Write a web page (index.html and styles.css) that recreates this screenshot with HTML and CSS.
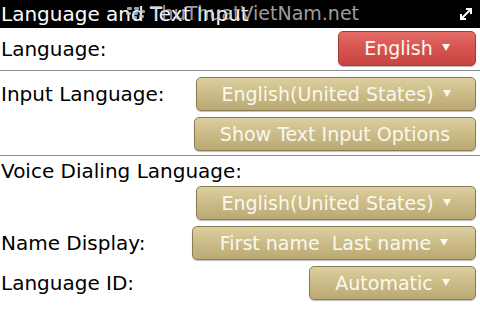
FILE: index.html
```html
<!DOCTYPE html>
<html lang="en">
<head>
    <meta charset="UTF-8">
    <meta name="viewport" content="width=device-width, initial-scale=1.0">
    <title>Language and Text Input</title>
    <link rel="stylesheet" href="styles.css">
</head>
<body>
    <div id="titlebar">
        <h1>Language and Text Input</h1>
        <div class="watermark">
            <svg width="20" height="14" viewBox="0 0 20 14">
                <rect x="1" y="1" width="5" height="3" rx="1"/>
                <rect x="8" y="1" width="5" height="3" rx="1"/>
                <rect x="0" y="6" width="5" height="3" rx="1"/>
                <rect x="7" y="6" width="5" height="3" rx="1"/>
                <rect x="14" y="4" width="5" height="3" rx="1"/>
                <rect x="6" y="10" width="5" height="3" rx="1"/>
                <rect x="13" y="9" width="5" height="3" rx="1"/>
            </svg>
            <span>ThuThuatVietNam.net</span>
        </div>
        <svg class="expand" width="16" height="16" viewBox="0 0 16 16">
            <path d="M3 13 L13 3 M8 3 H13 V8 M3 8 V13 H8" fill="none" stroke="#fff" stroke-width="2"/>
        </svg>
    </div>

    <div class="section first">
        <div class="row">
            <span class="label">Language:</span>
            <button class="select red">English<i class="arrow"></i></button>
        </div>
    </div>

    <div class="section">
        <div class="row">
            <span class="label">Input Language:</span>
            <button class="select w-wide">English(United States)<i class="arrow"></i></button>
        </div>
        <div class="row end">
            <button class="select w-wide2">Show Text Input Options</button>
        </div>
    </div>

    <div class="section last">
        <div class="label-line">Voice Dialing Language:</div>
        <div class="row end">
            <button class="select w-wide">English(United States)<i class="arrow"></i></button>
        </div>
        <div class="row">
            <span class="label">Name Display:</span>
            <button class="select w-name">First name&nbsp; Last name<i class="arrow"></i></button>
        </div>
        <div class="row">
            <span class="label">Language ID:</span>
            <button class="select w-auto">Automatic<i class="arrow"></i></button>
        </div>
    </div>
</body>
</html>
```

FILE: styles.css
```css
body {
    font-family: "DejaVu Sans", sans-serif;
    background-color: #fff;
    margin: 0;
    padding: 0;
    width: 480px;
    height: 320px;
    overflow: hidden;
}

#titlebar {
    position: relative;
    height: 28px;
    background-color: #000;
    display: flex;
    align-items: center;
    justify-content: space-between;
    padding: 0 4px 0 1px;
}

#titlebar h1 {
    margin: 0;
    color: #fff;
    font-size: 20px;
    font-weight: normal;
}

.watermark {
    position: absolute;
    left: 126px;
    top: 2px;
    display: flex;
    align-items: center;
    gap: 4px;
    color: rgba(200, 200, 200, 0.8);
    fill: rgba(200, 200, 200, 0.8);
    font-size: 19px;
}

.expand {
    margin-right: 2px;
}

.section {
    border-bottom: 1px solid #8c8c8c;
    padding: 0 4px 4px 1px;
}

.section.first {
    padding-top: 3px;
}

.section.last {
    border-bottom: none;
}

.row {
    display: flex;
    align-items: center;
    justify-content: space-between;
    margin-top: 6px;
}

.row.end {
    justify-content: flex-end;
}

.section.first .row {
    margin-top: 0;
}

.label,
.label-line {
    font-size: 20px;
    color: #000;
}

.label-line {
    height: 28px;
    line-height: 28px;
    margin-top: 1px;
}

.label-line + .row {
    margin-top: 1px;
}

.select {
    font-family: "DejaVu Sans", sans-serif;
    font-size: 19px;
    color: #fbf8ee;
    height: 34px;
    border: 1px solid #8a7c55;
    border-radius: 5px;
    background: linear-gradient(#dccf9f, #cbbb88 50%, #bba973);
    box-shadow: 0 1px 1px rgba(0, 0, 0, 0.25);
    padding: 0 0 1px 0;
    text-align: center;
    white-space: nowrap;
}

.select.red {
    width: 138px;
    height: 35px;
    border-color: #a33a37;
    background: linear-gradient(#e46c67, #d65450 50%, #c84440);
}

.w-wide { width: 280px; }
.w-wide2 { width: 282px; }
.w-name { width: 284px; }
.w-auto { width: 167px; }

.arrow {
    display: inline-block;
    vertical-align: middle;
    margin: 0 0 4px 9px;
    width: 0;
    height: 0;
    border-left: 4px solid transparent;
    border-right: 4px solid transparent;
    border-top: 7px solid #fbf8ee;
}
```
